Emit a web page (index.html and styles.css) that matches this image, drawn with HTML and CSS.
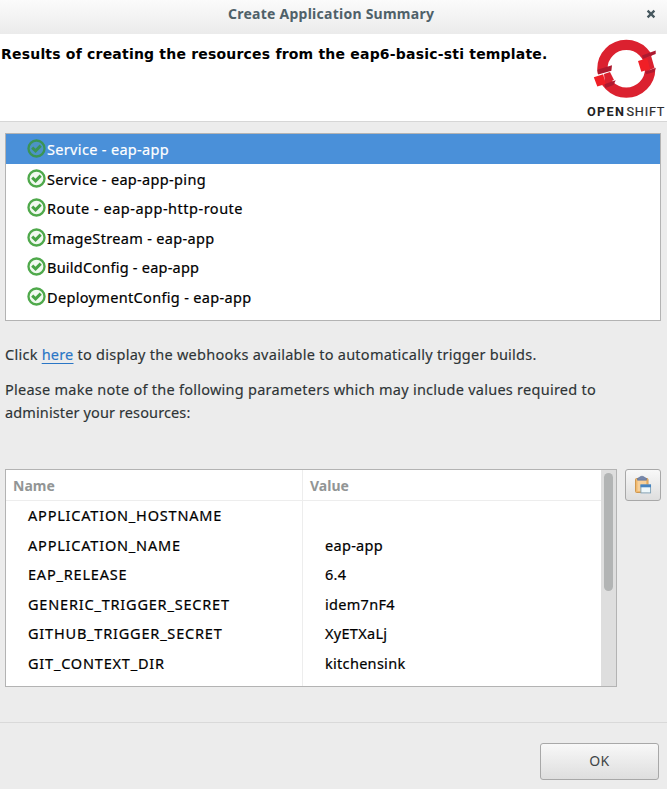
FILE: index.html
```html
<!DOCTYPE html>
<html lang="en">
<head>
<meta charset="utf-8">
<title>Create Application Summary</title>
<link rel="stylesheet" href="styles.css">
</head>
<body>
<svg width="0" height="0" class="defs" aria-hidden="true">
  <symbol id="ok" viewBox="0 0 18 18">
    <circle class="ring" cx="9" cy="9" r="7.6"/>
    <path class="tick" d="M4.9 8.2l3.2 3L13 6.3"/>
  </symbol>
</svg>
<div class="dialog">
  <div class="titlebar">
    <span class="title">Create Application Summary</span>
    <svg class="close" viewBox="0 0 10 10"><path d="M1.6 1.6l6.8 6.8M8.4 1.6L1.6 8.4"/></svg>
  </div>
  <header class="header">
    <h1>Results of creating the resources from the eap6-basic-sti template.</h1>
    <div class="logo">
      <svg viewBox="0 0 80 68">
        <circle class="logo-ring" cx="39.3" cy="34.7" r="23.9"/>
        <path class="gap" d="M8 40.5L25 36l-6 6-3 8L8 54zM60 23.5L71 19v15l-9 3z"/>
        <path class="band" d="M17 40l6-2 4 8-9 4zM58 24l6-2.5 3.5 12.5-6 2.5z"/>
        <path class="dark" d="M10.3 35.8L25 31.3l-.6 5.4-13.2 3.8zM17.3 50.3l11.4-4-2.2 4.6-8 3.2zM55 21.4l13.7-4.8v3.4L56 24.8zM58 37.8l10.9-4.1-1.6 4.2-8.3 2.4z"/>
        <path class="bright" d="M6.8 43.3l9.4-3L18.6 50l-8.3 2.6zM51 27l9.3-2.7L63 35l-8.7 2.8z"/>
      </svg>
      <div class="logo-text"><b>OPEN</b><span>SHIFT</span></div>
    </div>
  </header>
  <main class="content">
    <ul class="resources">
      <li class="selected"><svg><use href="#ok"/></svg><span>Service - eap-app</span></li>
      <li><svg><use href="#ok"/></svg><span>Service - eap-app-ping</span></li>
      <li class="wide"><svg><use href="#ok"/></svg><span>Route - eap-app-http-route</span></li>
      <li><svg><use href="#ok"/></svg><span>ImageStream - eap-app</span></li>
      <li class="narrow"><svg><use href="#ok"/></svg><span>BuildConfig - eap-app</span></li>
      <li><svg><use href="#ok"/></svg><span>DeploymentConfig - eap-app</span></li>
    </ul>
    <p class="webhooks">Click <a href="#">here</a> to display the webhooks available to automatically trigger builds.</p>
    <p class="note">Please make note of the following parameters which may include values required to<br><span>administer your resources:</span></p>
    <div class="params">
      <div class="table">
        <div class="names">
          <div class="th">Name</div>
          <div class="td">APPLICATION_HOSTNAME</div>
          <div class="td">APPLICATION_NAME</div>
          <div class="td">EAP_RELEASE</div>
          <div class="td">GENERIC_TRIGGER_SECRET</div>
          <div class="td">GITHUB_TRIGGER_SECRET</div>
          <div class="td">GIT_CONTEXT_DIR</div>
        </div>
        <div class="values">
          <div class="th">Value</div>
          <div class="td"></div>
          <div class="td">eap-app</div>
          <div class="td">6.4</div>
          <div class="td">idem7nF4</div>
          <div class="td">XyETXaLj</div>
          <div class="td">kitchensink</div>
        </div>
        <div class="scrollbar"><div class="thumb"></div></div>
      </div>
      <button class="copy" aria-label="Copy">
        <svg viewBox="0 0 18 20">
          <rect x="1.5" y="3.5" width="12.5" height="14" rx="1" fill="#f0b96f" stroke="#cf9850"/>
          <path d="M3.5 4.5h8.5v11.5H3.5z" fill="#f7d09a"/>
          <path d="M3.5 5.2V3.4Q5 3 5.6 2 8 .4 10.4 2 11 3 12.5 3.4V5.2z" fill="#7687ab" stroke="#5f7196" stroke-width=".6"/>
          <rect x="6.9" y="9.9" width="9.7" height="8" fill="#eef8fb" stroke="#7d9fb4" stroke-width=".9"/>
          <path d="M6.5 9.5h10.5v2.8H6.5z" fill="#4583c0"/>
        </svg>
      </button>
    </div>
  </main>
  <footer class="footer"><button class="confirm">OK</button></footer>
</div>
</body>
</html>
```
FILE: styles.css
```css
* { box-sizing: border-box; }
body { margin: 0; font: 14.5px/22px "Noto Sans", "Open Sans", sans-serif; color: #2e3436; background: #ececec; }
.defs { position: absolute; }
.dialog { width: 667px; height: 789px; display: flex; flex-direction: column; overflow: hidden; }

.titlebar { height: 34px; display: flex; align-items: center; padding: 0 11px 7px 228px; justify-content: space-between; background: linear-gradient(#fbfbfb, #ebebeb); }
.title { font-size: 14px; font-weight: 700; letter-spacing: .25px; color: #4f6169; }
.close { width: 10px; height: 10px; }
.close path { stroke: #47585f; stroke-width: 2.3; fill: none; }

.header { height: 88px; display: flex; justify-content: space-between; background: #fff; border-bottom: 1px solid #d6d6d6; padding-left: 1px; }
h1 { margin: 10px 0 0; font: 700 14px/20px "DejaVu Sans", sans-serif; letter-spacing: .2px; color: #000; white-space: nowrap; }
.logo { width: 80px; flex: none; }
.logo svg { display: block; width: 80px; height: 68px; }
.logo-ring { fill: none; stroke: #db212f; stroke-width: 10.3; }
.gap { fill: #fff; }
.band { fill: #db212f; }
.bright { fill: #f01f26; }
.dark { fill: #ad1a2f; }
.logo-text { display: flex; height: 19px; padding-top: 1px; font: 400 12.7px/18px Roboto, sans-serif; color: #2c2c2c; white-space: nowrap; }
.logo-text b { width: 39.5px; letter-spacing: 1.3px; color: #222; }
.logo-text span { letter-spacing: .8px; -webkit-text-stroke: .2px; }

.content { padding: 11px 6px 0 5px; flex: 1; }
.resources { list-style: none; margin: 0; padding: 0; height: 188px; background: #fff; border: 1px solid #b3b3b3; color: #000; letter-spacing: .33px; -webkit-text-stroke: .2px; }
.resources li { --face: #f1f9f0; height: 29.5px; display: flex; align-items: center; padding-left: 21px; }
.resources svg { width: 19px; height: 19px; margin-right: 1px; }
.resources span { padding-top: 1px; }
.ring { fill: var(--face); stroke: var(--mark, #4fa94b); stroke-width: 2.2; }
.tick { fill: none; stroke: var(--mark, #46a343); stroke-width: 2.8; }
.resources .selected { --face: #4c93c4; --mark: #3a9455; background: #4a90d9; color: #fff; }
.resources .wide { letter-spacing: .51px; }
.resources .narrow { letter-spacing: .23px; }

p { margin: 0; letter-spacing: .26px; white-space: nowrap; -webkit-text-stroke: .15px; }
.webhooks { margin-top: 22px; }
.webhooks a { color: #2a76c6; text-underline-offset: 3px; letter-spacing: .2px; }
.note { margin-top: 13px; line-height: 23px; }
.note span { letter-spacing: .12px; }

.params { display: flex; gap: 7px; align-items: flex-start; margin-top: 45px; }
.table { width: 612px; height: 218px; display: flex; background: #fff; border: 1px solid #b3b3b3; color: #000; }
.params .table { width: 612px; }
.names { width: 297px; border-right: 1px solid #ededed; letter-spacing: .8px; }
.values { flex: 1; letter-spacing: .3px; }
.th { height: 31px; padding: 5px 7px 0; border-bottom: 1px solid #ededed; font-weight: 700; font-size: 14px; letter-spacing: 0; color: #929595; }
.td { height: 29.5px; line-height: 29px; padding-left: 22px; -webkit-text-stroke: .2px; }
.scrollbar { width: 15px; background: #dedede; padding: 3px 3px 0; }
.thumb { width: 9px; height: 118px; border-radius: 5px; background: #b2b4b4; }
.params .table { width: 612px; flex: 0 0 612px; }
.params { gap: 8px; }

button { font: inherit; color: #3f4547; border: 1px solid #a8a8a8; border-radius: 3px; background: linear-gradient(#f8f8f8, #dedede); display: flex; align-items: center; justify-content: center; padding: 0; }
.copy { width: 37px; height: 32px; }
.copy svg { width: 18px; height: 20px; }
.footer { height: 67px; border-top: 1px solid #d9d9d9; padding: 20px 8px 0 0; display: flex; justify-content: flex-end; align-items: flex-start; }
.confirm { width: 119px; height: 37px; padding-bottom: 1px; font-size: 14px; letter-spacing: .5px; }
```
